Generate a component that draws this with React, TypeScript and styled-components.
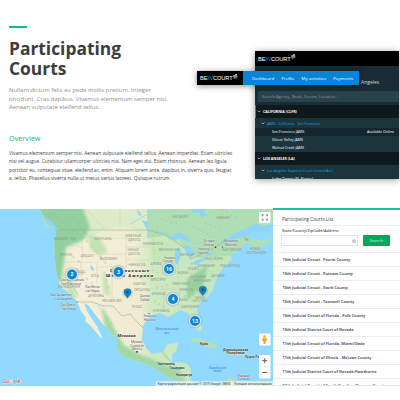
import React from "react";
import styled, { createGlobalStyle } from "styled-components";

const Global = createGlobalStyle`
  * { box-sizing: border-box; }
  html, body { margin: 0; background: #fff; overflow: hidden; }
  body { font-family: "Open Sans", "Noto Sans", sans-serif; }
  h1, h2, h3, p, ul { margin: 0; padding: 0; font-weight: 400; }
`;

const Page = styled.main`
  width: 400px;
  height: 400px;
  overflow: hidden;
  background: #fff;
  display: flex;
  flex-direction: column;
`;

const Hero = styled.section`
  display: flex;
  height: 208px;
  flex: none;
`;

const Intro = styled.div`
  width: 254px;
  padding: 26px 0 0 9px;
  white-space: nowrap;
`;

const Accent = styled.div`
  width: 18px;
  height: 2px;
  background: #0dbd88;
`;

const Title = styled.h1`
  margin-top: 11px;
  font-size: 17.4px;
  line-height: 19.5px;
  font-weight: 700;
  color: #3b3d40;
`;

const Lead = styled.p`
  margin-top: 8px;
  font-size: 5.95px;
  line-height: 8.7px;
  color: #8d8f91;
`;

const Subtitle = styled.h2`
  margin-top: 20px;
  font-size: 7.25px;
  line-height: 12px;
  color: #12b583;
`;

const Body = styled.p`
  margin-top: 5px;
  font-size: 4.79px;
  line-height: 8.2px;
  color: #3e4144;
`;

const Showcase = styled.div`
  position: relative;
  width: 146px;
  padding: 51px 0 0 1px;
`;

const AppCard = styled.div`
  width: 144px;
  height: 128px;
  overflow: hidden;
  background: #1a2c34;
  box-shadow: 0 1px 7px rgba(0, 0, 0, 0.4);
  color: #fff;
  white-space: nowrap;
`;

const AppHeader = styled.div`
  height: 15px;
  background: #000;
  padding-left: 3px;
  display: flex;
  align-items: center;
`;

const City = styled.div`
  height: 25px;
  padding: 11px 0 0 106px;
  font-size: 5px;
  line-height: 10px;
  color: #d3d9dc;
`;

const AppSearch = styled.div`
  height: 11px;
  margin: 0 0 3px 3px;
  padding-left: 4px;
  background: #29434d;
  color: #8b9ea6;
  font-size: 4.1px;
  line-height: 11px;
`;

const Group = styled.div<{ $active?: boolean }>`
  height: 13px;
  padding-left: ${(p) => (p.$active ? 1 : 2)}px;
  border-left: ${(p) => (p.$active ? "1px solid #1387d6" : "0")};
  background: #0e191e;
  display: flex;
  align-items: center;
  gap: 2px;
  font-size: 3.6px;
  font-weight: 700;
`;

const Region = styled.div`
  height: 10px;
  padding: 1px 0 0 6px;
  background: #1c343c;
  display: flex;
  align-items: center;
  gap: 2px;
  font-size: 3.6px;
  color: #0eaaf0;
`;

const Office = styled.div<{ $selected?: boolean }>`
  height: 8px;
  padding: 0 5px 0 17px;
  background: ${(p) => (p.$selected ? "#14262d" : "#1c343c")};
  display: flex;
  justify-content: space-between;
  align-items: center;
  font-size: 3.6px;
  line-height: 8px;
`;

const FloatingNav = styled.nav`
  position: absolute;
  left: -57px;
  top: 71px;
  width: 162px;
  height: 14px;
  display: flex;
  box-shadow: 0 1px 6px rgba(0, 0, 0, 0.45);
  color: #fff;
`;

const NavBrand = styled.div`
  width: 46px;
  padding-left: 3px;
  background: #000;
  display: flex;
  align-items: center;
`;

const NavLinks = styled.div`
  flex: 1;
  padding: 0 6px 0 9px;
  background: #0784d8;
  display: flex;
  justify-content: space-between;
  align-items: center;
  font-size: 4.3px;
  white-space: nowrap;
`;

const LogoText = styled.span`
  display: flex;
  align-items: center;
  font-family: "Liberation Sans", Arial, sans-serif;
  font-size: 5.7px;
  line-height: 8px;
  letter-spacing: -0.1px;
  color: #fff;
  i { color: #0d83d4; }
  svg { margin: -3px 0 0 -1px; }
`;

const Locator = styled.section`
  display: flex;
  height: 178px;
  flex: none;
`;

const MapFrame = styled.div`
  width: 273px;
  padding-top: 1px;
  svg { display: block; }
`;

const Panel = styled.aside`
  width: 127px;
  height: 178px;
  border-top: 2px solid #13c49c;
  border-bottom: 1px solid #e6e7e8;
  overflow: hidden;
  white-space: nowrap;
`;

const PanelTitle = styled.h3`
  height: 16px;
  padding-left: 9px;
  border-bottom: 1px solid #efefef;
  font-size: 4.65px;
  line-height: 18px;
  color: #3f4244;
`;

const Label = styled.label`
  display: block;
  padding: 0 0 0 9px;
  height: 9px;
  font-size: 3.8px;
  line-height: 10px;
  font-weight: 600;
  color: #505356;
`;

const SearchRow = styled.div`
  display: flex;
  gap: 5px;
  padding-left: 8px;
  height: 16.5px;
`;

const Field = styled.div`
  width: 77px;
  height: 11px;
  border: 1px solid #e3e5e6;
  display: flex;
  justify-content: flex-end;
  align-items: center;
  padding-right: 1px;
`;

const SearchButton = styled.button`
  width: 27px;
  height: 11px;
  padding: 0;
  border: 0;
  border-radius: 1px;
  background: #04a957;
  color: #d6f3e3;
  font: 4.2px/11px "Open Sans", sans-serif;
`;

const CourtRow = styled.li`
  height: 14.05px;
  padding-left: 9.5px;
  border-top: 1px solid #ececec;
  list-style: none;
  font-size: 3.85px;
  line-height: 14px;
  font-weight: 700;
  color: #57595c;
`;

const Logo = () => (
  <LogoText>
    BE<i>IN</i>COURT
    <svg width="6" height="6" viewBox="0 0 6 6" stroke="#fff" strokeWidth=".7" fill="none">
      <path d="M1 2.2L3.3 1.5M2.2 1.8V4.8M3.8 .5V4.5M3 .9L5 .5M4.8 1.2V3.5" />
    </svg>
  </LogoText>
);

const Chevron = () => (
  <svg width="4" height="3" viewBox="0 0 4 3" fill="none" stroke="#c6d0d4" strokeWidth=".7">
    <path d="M.6 .7L2 2L3.4 .7" />
  </svg>
);

const courts = [
  "10th Judicial Circuit - Peoria County",
  "10th Judicial Circuit - Putnam County",
  "10th Judicial Circuit - Stark County",
  "10th Judicial Circuit - Tazewell County",
  "10th Judicial Circuit of Florida - Polk County",
  "10th Judicial District Court of Nevada",
  "11th Judicial Circuit of Florida- Miami/Dade",
  "11th Judicial Circuit of Illinois - McLean County",
  "11th Judicial District Court of Nevada-Hawthorne",
  "12th Judicial Circuit of South Carolina-Florence County",
];

type Place = [string, number, number, number?];

const regions: Place[] = [
  ["ВАШИНГТОН", 65, 240, 22], ["МОНТАНА", 103, 240, 17], ["ОРЕГОН", 66, 256, 12],
  ["АЙДАХО", 87, 257, 13], ["ВАЙОМИНГ", 109, 259.5, 18], ["НЕВАДА", 79, 272.5, 12],
  ["ЮТА", 95, 277, 8], ["КАЛИФОРНИЯ", 69, 288, 22], ["АРИЗОНА", 96, 297, 16],
  ["СЕВЕРНАЯ", 133, 237, 16], ["ДАКОТА", 134, 240.5, 12], ["ЮЖНАЯ", 133, 251, 11],
  ["ДАКОТА", 134, 254.5, 12], ["МИННЕСОТА", 153, 244.5, 20], ["ВИСКОНСИН", 169, 251, 20],
  ["МИЧИГАН", 187, 256, 14], ["АЙОВА", 156, 264.5, 11], ["НЕБРАСКА", 137, 266, 17],
  ["ОНТАРИО", 180, 217.5, 16], ["КВЕБЕК", 223, 218.5, 13], ["НЬЮ-ЙОРК", 214, 260, 18],
  ["ОГАЙО", 193, 270, 11], ["ИНДИАНА", 183, 274, 11], ["ПЕНСИЛЬВАНИЯ", 206, 267, 18],
  ["ЗАПАДНАЯ", 198, 277.5, 16], ["ВИРГИНИЯ", 202, 281.5, 17], ["ДЕЛАВЭР", 218, 277, 14],
  ["КЕНТУККИ", 181, 285, 17], ["МИССУРИ", 158, 280.5, 15], ["КАНЗАС", 140, 285, 13],
  ["ТЕННЕССИ", 186, 291, 14], ["ОКЛАХОМА", 142, 291, 16], ["АРКАНЗАС", 159, 295, 15],
  ["ЮЖНАЯ", 200, 298.5, 10], ["КАРОЛИНА", 200, 302, 15], ["АЛАБАМА", 182, 301, 10],
  ["ТЕХАС", 137, 308, 11], ["ЛУИЗИАНА", 161, 312, 17], ["ДЖОРДЖИЯ", 190, 307.5, 18],
  ["НЬЮ-МЕКСИКО", 112, 302, 20], ["НБ", 247, 241, 4], ["НЬЮ-ГЭМПШИР", 232, 250.5, 20],
  ["НОВАЯ", 255, 249.5, 10], ["ШОТЛАНДИЯ", 256, 253.5, 20], ["РОД-АЙЛЕНД", 230, 266.5, 20],
];

const cities: Place[] = [
  ["Сан-Франциско", 72, 281, 24], ["San Francisco", 71, 284.5, 20], ["Лос-Анджелес", 61, 296.2, 22],
  ["Los Angeles", 64, 299.7, 17], ["Лас-Вегас", 92.5, 288, 15], ["Las Vegas", 92.5, 291.5, 14],
  ["Сан-Диего", 68, 306, 15], ["San Diego", 69, 309.5, 14], ["Чикаго", 169.5, 258.8, 11],
  ["Chicago", 168, 262.2, 11], ["Торонто", 203, 250.3, 12], ["Toronto", 203, 253.7, 11],
  ["Оттава", 209, 242, 11], ["Ottawa", 209, 245.5, 10], ["Монреаль", 231, 242, 15],
  ["Montreal", 231, 245.5, 12], ["Даллас", 145, 297.3, 10], ["Dallas", 145, 300.8, 9],
  ["Хьюстон", 150, 317.3, 13], ["Houston", 150, 320.8, 12], ["Мехико", 137, 343.3, 12],
  ["Ciudad de", 137, 346.8, 14], ["México", 137, 350.3, 10], ["Каракас", 244, 377, 12],
  ["Caracas", 244, 380.4, 12],
];

const countries: Place[] = [
  ["Мексика", 126.5, 337, 18], ["Куба", 204, 345, 8], ["Доминиканская", 235.5, 351, 25],
  ["Республика", 235.5, 354.4, 18], ["Пуэрто-Ри", 252, 358, 14], ["Гватемала", 166, 365.2, 17],
  ["Гондурас", 177, 369, 15], ["Никарагуа", 184, 375.8, 16],
];

const clusters: [number, number, string][] = [
  [72, 274.5, "2"], [118.5, 272, "3"], [169, 269, "16"], [173, 299, "4"], [195, 321, "13"],
];

const NorthAmerica = () => (
  <svg width="273" height="177" viewBox="0 209 273 177" fontFamily="Roboto, 'Noto Sans', sans-serif">
    <defs>
      <linearGradient id="land" x1="50" x2="273" y1="0" y2="0" gradientUnits="userSpaceOnUse">
        <stop offset="0" stopColor="#d8e9bf" />
        <stop offset=".14" stopColor="#f5eed8" />
        <stop offset=".38" stopColor="#f2edd4" />
        <stop offset=".46" stopColor="#cfe9c1" />
        <stop offset="1" stopColor="#b8e3ba" />
      </linearGradient>
      <filter id="soft" x="-20%" y="-20%" width="140%" height="140%"><feGaussianBlur stdDeviation="1.8" /></filter>
      <clipPath id="continent">
        <path d="M39 208L45 218 52 224 56 233 54 244 55 258 56 270 58 281 62 288 69 293 75 299 78 304 81 311 86 318 85 321 91 326 95 331 101 338 102 337 98 328 92 319 87 311 84 303 89 306 94 313 101 322 111 333 117 339 117 349 121 355 130 359 140 362 151 366 162 373 169 378 182 382 187 387H196L190 379 191 368 186 363 172 362 172 355 177 350 178 343 168 344 163 352 152 354 146 348 142 339 143 326 147 319 152 315 160 313 168 317 174 314 180 310 188 313 192 319 195 328 199 332 202 329 200 319 197 311 199 304 207 297 212 292 215 283 219 274 224 266 232 260 230 255 239 250 247 242 253 245 250 250 257 250 267 243 274 238 261 241 248 239 247 234 254 228 266 225 274 223V208Z" />
      </clipPath>
    </defs>
    <rect y="209" width="273" height="177" fill="#91d9fe" />
    <g clipPath="url(#continent)">
      <rect y="208" width="273" height="180" fill="url(#land)" />
      <path d="M78 205H147V239H82Z" fill="#dcebc8" />
      <path d="M90 238H141L134 229 120 226 104 230Z" fill="#eeedd2" />
      <path d="M147 205H274V252L200 258 165 236 147 238Z" fill="#b0deb4" />
      <g filter="url(#soft)">
        <path d="M36 205H82L90 228 82 241 66 247 61 280 53 285 44 240Z" fill="#92d19f" />
        <path d="M88 233L100 239 108 252 98 255 90 248ZM102 270L107 280 111 296 104 294ZM62 272L70 281 77 298 71 299Z" fill="#c3e2b4" />
        <path d="M150 240H180L186 256 172 266 152 262Z" fill="#c6e7ba" />
        <path d="M66 251H88V268H72ZM80 270L98 290 86 302 74 285Z" fill="#f7edd9" />
        <path d="M101 306L109 318 117 333 124 345 142 355 180 370 188 387H160L110 352Z" fill="#a3d8a4" />
        <path d="M106 300H137L143 322 137 344 123 334Z" fill="#f2ebd3" />
        <path d="M132 280L149 286 143 312 130 308Z" fill="#eeebcf" />
        <path d="M187 279L208 264 203 285 187 301Z" fill="#98d19c" />
      </g>
      <g fill="none" stroke="#8acb98" strokeWidth="1.3" opacity=".5">
        <path d="M49 211L61 220 72 228 84 239M66 209L76 221 87 235M59 249V274M67 276L78 295M160 350L177 368" />
        <path d="M161 219L178 224M205 223L225 231M222 210L240 220M184 297L203 276M154 301L164 307M151 229L166 233M193 226L210 236M152 270L165 276M156 288L170 284" strokeDasharray="2 3" />
      </g>
      <g fill="none" stroke="#a9d8a4" strokeWidth="2" opacity=".5" strokeDasharray="3 4">
        <path d="M86 240L98 254 108 266M104 272L110 292M72 256L82 264M76 268L92 284M93 290L106 300M98 305L113 325" />
      </g>
      <g fill="none" stroke="#b9c4b2" strokeWidth=".35">
        <path d="M56 245H75L83 248M56 262H96M82 232V260M81 262V276L95 295M97 262V283M126 236V267M97 254H126M98 267H126M112 267V302M126 247H150M126 260H151M126 278H154M154 235V255M154 263H170M154 278H172M150 289H189M164 286V311M178 265V286M179 290V311M189 289L206 293M191 263V280M87 209L104 229M120 209V229" />
      </g>
      <path d="M57 230H147L166 235 179 244 187 250 190 259 204 253 217 246 228 239 240 233 247 239M78 302H92L104 306H113L122 316 130 314 138 323 143 328" fill="none" stroke="#9aaba0" strokeWidth=".6" />
    </g>
    <g fill="#8ed5f7">
      <path d="M191 208L193 213 199 213 202 218 206 216 204 208Z" />
      <path d="M168 239L174 235 179 232 187 237 192 243 186 241 181 239 174 240Z" />
      <path d="M179 247L175 253 175 263 178 265 180 258 181 251ZM183 245L191 247 195 253 191 258 186 253Z" />
      <path d="M190 264L197 260 206 258 204 261 195 265ZM203 257L209 253 214 253 210 256Z" />
      <path d="M142 220L148 222 149 230 146 228ZM137 209L142 215 139 216Z" />
      <path d="M46 218L52 221 58 230 55 230Z" />
      <path d="M221 244L233 235 244 229 257 223 273 222 268 231 253 232 245 236 236 239Z" />
      <path d="M91 265L94 269 93 271 90 268Z" />
    </g>
    <path d="M130 224L139 219 148 214 158 216M159 231L177 237M219 244L232 234 246 228" fill="none" stroke="#91d9fe" strokeWidth=".8" />
    <g fill="#b8dfb0">
      <path d="M186 342L194 338 204 340 213 344 220 348 210 348 201 343 192 341ZM223 351L229 349 242 352 248 355 239 356 230 355ZM207 355L214 356 211 357ZM219 387L226 381 230 376 233 380 245 383 261 381 273 386V388Z" />
      <path d="M205 331L207 334M212 337L215 341M255 356L260 356M41 218L45 222 51 228 46 225Z" stroke="#b8dfb0" />
      <path d="M253 239L262 241 256 242ZM256 223L265 220 272 224 263 226Z" />
    </g>
    <g fontSize="2.9" fill="#909b91" textAnchor="middle">
      {regions.map(([t, x, y, w], i) => <text key={i} x={x} y={y} textLength={w} lengthAdjust="spacingAndGlyphs">{t}</text>)}
    </g>
    <g fontSize="3.3" fill="#555b5d" stroke="#fff" strokeOpacity=".6" strokeWidth=".5" paintOrder="stroke" textAnchor="middle">
      {cities.map(([t, x, y, w], i) => <text key={i} x={x} y={y} textLength={w} lengthAdjust="spacingAndGlyphs">{t}</text>)}
    </g>
    <g fontSize="3.6" fontWeight="700" fill="#3b3d3f" stroke="#fff" strokeOpacity=".6" strokeWidth=".5" paintOrder="stroke" textAnchor="middle">
      {countries.map(([t, x, y, w], i) => <text key={i} x={x} y={y} textLength={w} lengthAdjust="spacingAndGlyphs">{t}</text>)}
    </g>
    <g fontSize="4.3" fontWeight="900" fill="#26292b" stroke="#fff" strokeWidth=".5" paintOrder="stroke">
      <text x="110" y="272.3" textLength="39">Соединенные</text>
      <text x="106" y="277.3" textLength="47">Штаты Америки</text>
    </g>
    <g fontSize="3.3" fill="#3a8dcb" textAnchor="middle">
      <text x="167" y="330" textLength="23">Мексиканский</text><text x="167" y="334">зал.</text>
      <text x="217.5" y="368.5" textLength="17">Карибское</text><text x="217.5" y="372">море</text>
    </g>
    <g fill="#333"><circle cx="215.5" cy="247.2" r=".8" /><circle cx="137" cy="351.8" r=".9" /><circle cx="222.5" cy="247" r=".6" /><circle cx="149" cy="313.5" r=".6" /><circle cx="77" cy="301.8" r=".6" /></g>
    {clusters.map(([x, y, n]) => (
      <g key={n}>
        <circle cx={x} cy={y} r="7.3" fill="#9e9ea2" opacity=".4" />
        <circle cx={x} cy={y} r="6.2" fill="#e4e3e3" opacity=".95" />
        <circle cx={x} cy={y} r="4.9" fill="#0987d6" />
        <text x={x} y={y + 1.9} fontSize="5.2" fontWeight="700" fill="#fff" textAnchor="middle">{n}</text>
      </g>
    ))}
    {[[127.5, 293], [202.8, 290.5]].map(([x, y]) => (
      <g key={x}>
        <circle cx={x} cy={y} r="5.5" fill="#6b5a50" opacity=".13" />
        <path d={`M${x} ${y + 5.5}C${x - 1.5} ${y + 2.7} ${x - 3.9} ${y + 1.7} ${x - 3.9} ${y - 0.7}A3.9 3.9 0 1 1 ${x + 3.9} ${y - 0.7}C${x + 3.9} ${y + 1.7} ${x + 1.5} ${y + 2.7} ${x} ${y + 5.5}Z`} fill="#0b85c6" />
        <circle cx={x} cy={y - 0.8} r="1.2" fill="#244b63" />
      </g>
    ))}
    <g fill="#fff">
      <rect x="259" y="212" width="11.5" height="11" rx=".7" />
      <rect x="259" y="333.5" width="11.5" height="12" rx=".7" />
      <rect x="259" y="355" width="11.5" height="23.5" rx=".7" />
    </g>
    <path d="M262.2 216.3V214.8H263.9M265.8 214.8H267.4V216.3M267.4 218.5V220H265.8M263.9 220H262.2V218.5" fill="none" stroke="#646464" strokeWidth=".9" />
    <path d="M262.2 360.7H267.2M264.7 358.2V363.2M262.2 372.5H267.2" stroke="#606060" strokeWidth="1" />
    <path d="M260.5 366.7H269" stroke="#e5e5e5" strokeWidth=".5" />
    <circle cx="264.5" cy="336.6" r="1.5" fill="#f7b52c" />
    <path d="M262 338.2H267L266.5 341 265.6 341.6 265.4 344H263.6L263.4 341.6 262.5 341Z" fill="#f3a41f" />
    <rect x="156" y="381.2" width="117" height="4.8" fill="#f4f6f6" opacity=".72" />
    <g fontSize="3.4" fill="#444">
      <text x="157.5" y="384.6" textLength="73" lengthAdjust="spacingAndGlyphs">Картографические данные © 2019 Google, INEGI</text>
      <text x="234" y="384.6" textLength="38" lengthAdjust="spacingAndGlyphs">Условия использования</text>
    </g>
    <text x="2" y="383.4" fontSize="6" fontWeight="500" textLength="18.5" stroke="#fff" strokeWidth=".7" paintOrder="stroke">
      <tspan fill="#4285f4">G</tspan><tspan fill="#ea4335">o</tspan><tspan fill="#fbbc05">o</tspan><tspan fill="#4285f4">g</tspan><tspan fill="#34a853">l</tspan><tspan fill="#ea4335">e</tspan>
    </text>
  </svg>
);

export default function App() {
  return (
    <Page>
      <Global />
      <Hero>
        <Intro>
          <Accent />
          <Title>Participating<br />Courts</Title>
          <Lead>Nullam dictum felis eu pede mollis pretium. Integer<br />tincidunt. Cras dapibus. Vivamus elementum semper nisi.<br />Aenean vulputate eleifend tellus.</Lead>
          <Subtitle>Overview</Subtitle>
          <Body>Vivamus elementum semper nisi. Aenean vulputate eleifend tellus. Aenean imperdiet. Etiam ultricies<br />nisi vel augue. Curabitur ullamcorper ultricies nisi. Nam eget dui. Etiam rhoncus. Aenean leo ligula,<br />porttitor eu, consequat vitae, eleifend ac, enim. Aliquam lorem ante, dapibus in, viverra quis, feugiat<br />a, tellus. Phasellus viverra nulla ut metus varius laoreet. Quisque rutrum.</Body>
        </Intro>
        <Showcase>
          <AppCard>
            <AppHeader><Logo /></AppHeader>
            <City>Angeles</City>
            <AppSearch>Search Agency, Node, Forum, Location...</AppSearch>
            <Group $active><Chevron />CALIFORNIA (CLFR)</Group>
            <Region><Chevron />JAMS - California - San Francisco</Region>
            <Office $selected><span>San Francisco JAMS</span><span>Available Online</span></Office>
            <Office>Silicon Valley JAMS</Office>
            <Office>Walnut Creek JAMS</Office>
            <Group><Chevron />LOS ANGELES (LA)</Group>
            <Region><Chevron />Los Angeles Superior Court Central(A-L)</Region>
            <Office>Judge Dennis (N. Alonzo)</Office>
          </AppCard>
          <FloatingNav>
            <NavBrand><Logo /></NavBrand>
            <NavLinks><span>Dashboard</span><span>Profile</span><span>My activities</span><span>Payments</span></NavLinks>
          </FloatingNav>
        </Showcase>
      </Hero>
      <Locator>
        <MapFrame><NorthAmerica /></MapFrame>
        <Panel>
          <PanelTitle>Participating Courts List</PanelTitle>
          <Label>State/County/ZipCode/Address</Label>
          <SearchRow>
            <Field>
              <svg width="4" height="4" viewBox="0 0 4 4"><circle cx="2" cy="2" r="1.5" fill="#ddd" stroke="#aaa" strokeWidth=".6" /></svg>
            </Field>
            <SearchButton>Search</SearchButton>
          </SearchRow>
          <ul>{courts.map((c) => <CourtRow key={c}>{c}</CourtRow>)}</ul>
        </Panel>
      </Locator>
    </Page>
  );
}
